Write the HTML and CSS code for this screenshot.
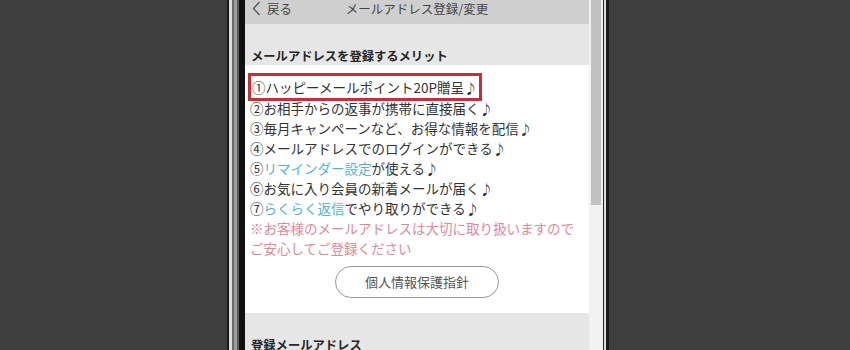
FILE: index.html
```html
<!DOCTYPE html>
<html lang="ja">
<head>
    <meta charset="UTF-8">
    <meta name="viewport" content="width=device-width, initial-scale=1.0">
    <title>メールアドレス登録/変更</title>
    <link rel="stylesheet" href="styles.css">
</head>
<body>
    <div class="stage">
        <div class="phone">
            <div class="bezel-left"></div>
            <div class="screen">
                <div class="topbar">
                    <a class="back" href="#">
                        <svg width="9" height="15" viewBox="0 0 9 15"><polyline points="7.5,1 1.5,7.5 7.5,14" fill="none" stroke="#555" stroke-width="1.3"/></svg>
                        <span>戻る</span>
                    </a>
                    <div class="title">メールアドレス登録/変更</div>
                    <div></div>
                </div>

                <div class="section-head">メールアドレスを登録するメリット</div>
                <div class="benefits">
                    <ul class="benefit-list">
                        <li class="highlight">①ハッピーメールポイント20P贈呈♪</li>
                        <li>②お相手からの返事が携帯に直接届く♪</li>
                        <li>③毎月キャンペーンなど、お得な情報を配信♪</li>
                        <li>④メールアドレスでのログインができる♪</li>
                        <li>⑤<a class="link" href="#">リマインダー設定</a>が使える♪</li>
                        <li>⑥お気に入り会員の新着メールが届く♪</li>
                        <li>⑦<a class="link" href="#">らくらく返信</a>でやり取りができる♪</li>
                    </ul>
                    <p class="note">※お客様のメールアドレスは大切に取り扱いますのでご安心してご登録ください</p>
                    <div class="btn-row">
                        <a class="pill-btn" href="#">個人情報保護指針</a>
                    </div>
                </div>

                <div class="section-head">登録メールアドレス</div>
            </div>
            <div class="scrollbar"><div class="thumb"></div></div>
            <div class="bezel-right"></div>
        </div>
    </div>
</body>
</html>
```

FILE: styles.css
```css
body {
    margin: 0;
    background: #3f3f3f;
    font-family: "Noto Sans CJK JP", "Noto Sans", sans-serif;
    color: #333;
    overflow: hidden;
}
.stage {
    height: 350px;
    padding-left: 227px;
}
.phone {
    display: flex;
    height: 350px;
}
.bezel-left {
    width: 18px;
    background: linear-gradient(to right,
        #1a1a1a 0, #1a1a1a 2px,
        #dcdcdc 2px, #dcdcdc 5px,
        #6a6a6a 5px, #6a6a6a 7px,
        #9c9c9c 7px, #9c9c9c 10px,
        #5c5c5c 10px, #5c5c5c 12px,
        #111 12px, #111 18px);
}
.bezel-right {
    width: 6px;
    background: linear-gradient(to right,
        #222 0, #222 1px,
        #dedede 1px, #dedede 3px,
        #1c1c1c 3px, #1c1c1c 6px);
}
.scrollbar {
    width: 14px;
    background: #f1f1f1;
}
.thumb {
    margin-left: 2px;
    width: 10px;
    height: 205px;
    background: #c1c1c1;
}
.screen {
    width: 344px;
    background: #fff;
}

.topbar {
    display: grid;
    grid-template-columns: 1fr auto 1fr;
    height: 24px;
    padding-top: 1px;
    box-sizing: border-box;
    background: #cfcfcf;
    font-size: 12.5px;
    line-height: 16px;
    color: #444;
}
.back {
    display: flex;
    align-items: flex-start;
    gap: 6px;
    padding-left: 7px;
    color: #444;
    text-decoration: none;
}
.title {
    text-align: center;
}

.section-head {
    padding: 24px 6px 1px;
    background: #e6e6e6;
    font-size: 12.3px;
    font-weight: bold;
    line-height: 16px;
    color: #262626;
}

.benefits {
    padding: 8px 12px 15px 5px;
    font-size: 13.5px;
    line-height: 20px;
}
.benefit-list {
    list-style: none;
    margin: 0;
    padding: 0;
}
.highlight {
    width: 234px;
    box-sizing: border-box;
    margin: 0 0 -3px -2px;
    padding: 1px 0 1px 1px;
    border: 3px solid #c4303a;
}
.link {
    color: #55b3cd;
    text-decoration: none;
}
.note {
    margin: 0;
    color: #d98a9c;
}
.btn-row {
    display: flex;
    justify-content: center;
    margin-top: 8px;
    padding-left: 7px;
}
.pill-btn {
    width: 164px;
    height: 32px;
    box-sizing: border-box;
    border: 1px solid #999;
    border-radius: 16px;
    font-size: 13px;
    line-height: 30px;
    text-align: center;
    color: #555;
    text-decoration: none;
}
```
